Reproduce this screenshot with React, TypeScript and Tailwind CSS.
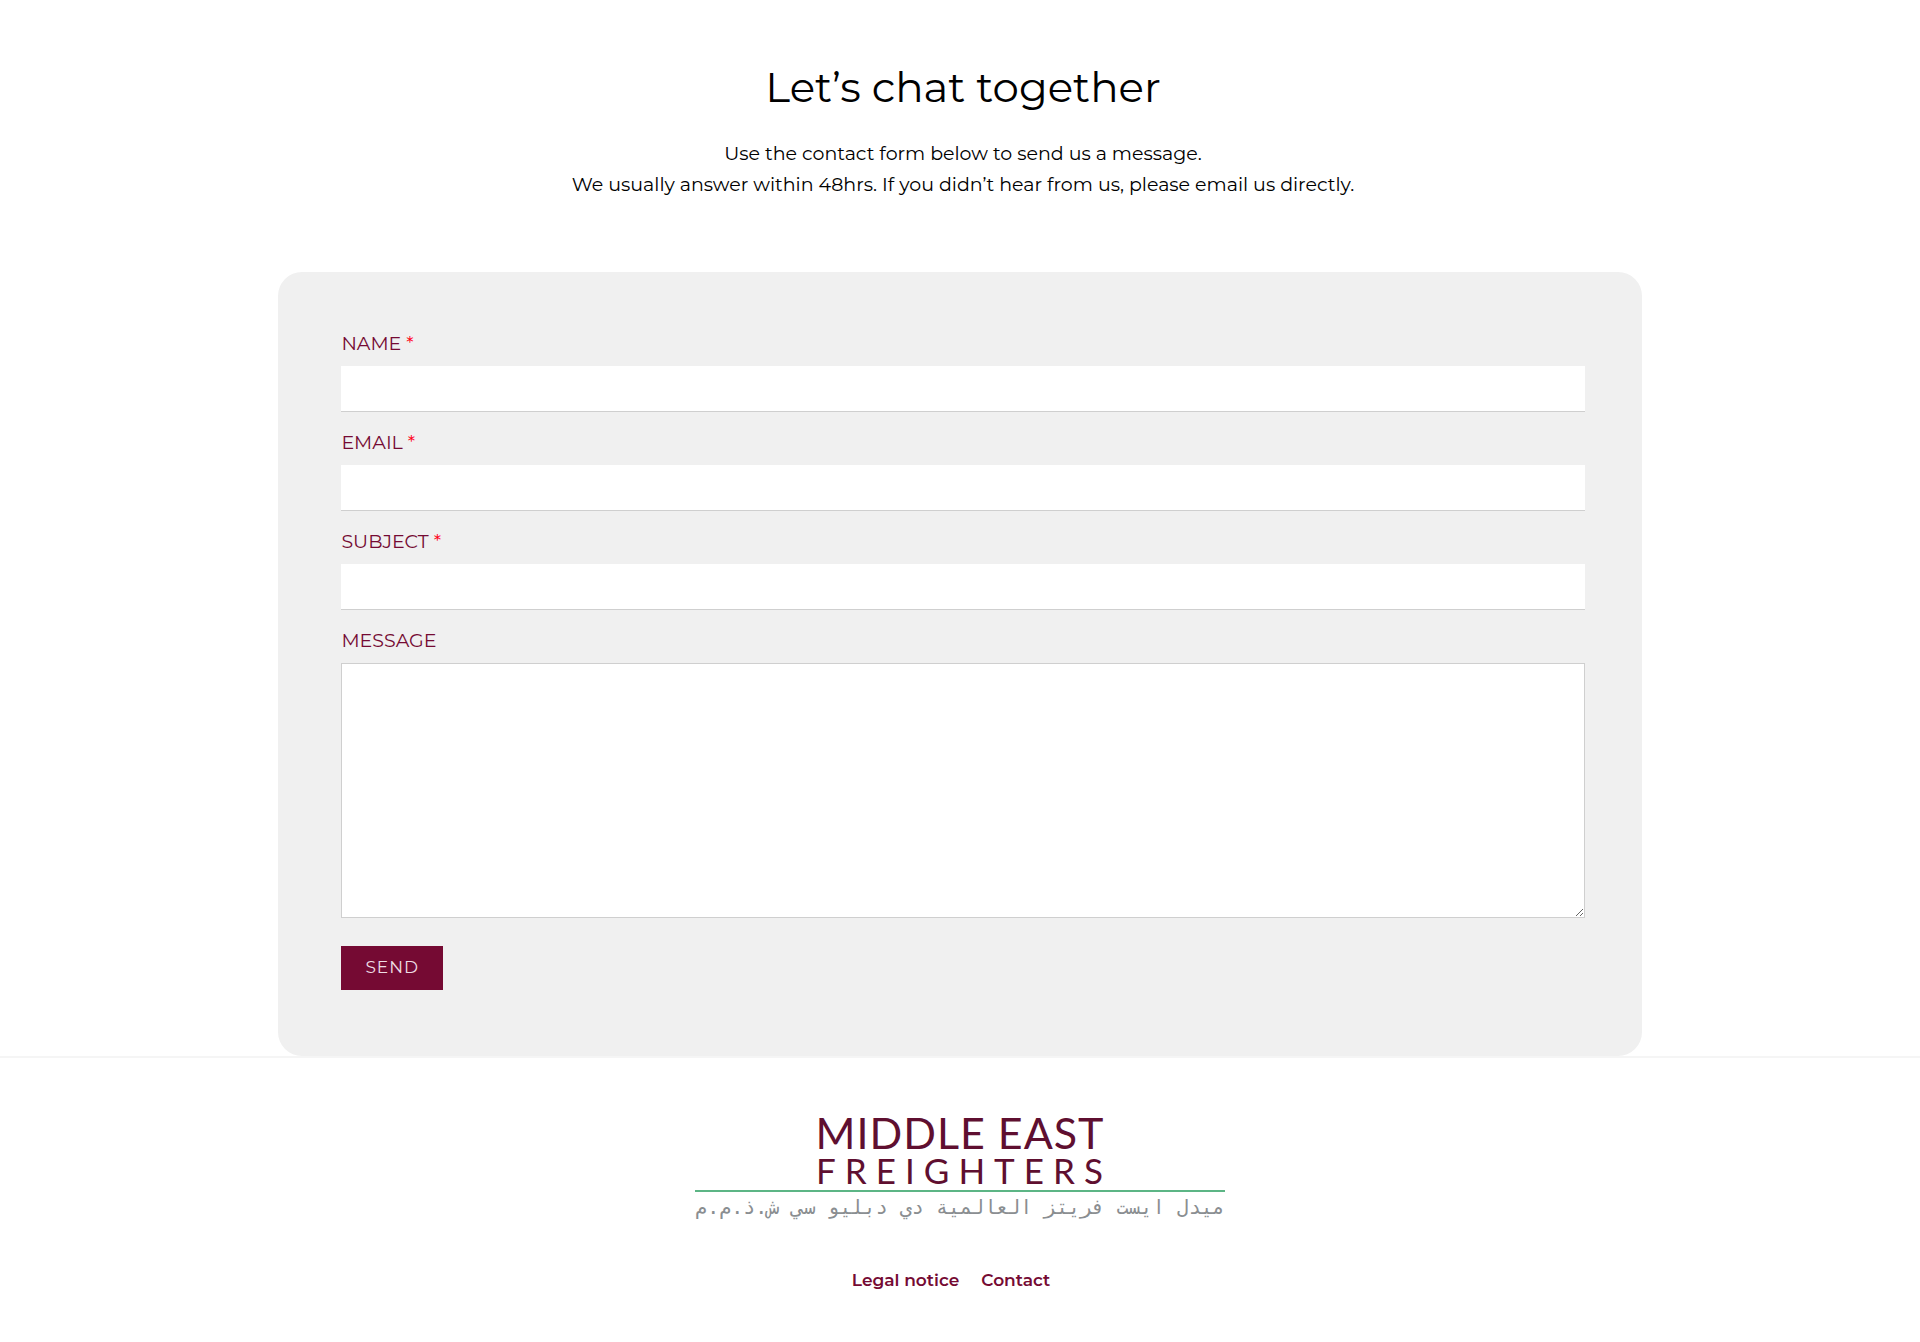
import type { FormEvent } from "react";

const fields = [
  { id: "name", label: "Name", type: "text" },
  { id: "email", label: "Email", type: "email" },
  { id: "subject", label: "Subject", type: "text" },
];

function Logo() {
  return (
    <a href="#home" className="flex flex-col items-center font-[Lato,sans-serif] text-[#5f0f30]">
      <span className="text-[43px] leading-[40px] tracking-[1px]">MIDDLE EAST</span>
      <span className="pl-2 text-[35px] leading-[34px] tracking-[9px]">FREIGHTERS</span>
      <span
        dir="rtl"
        lang="ar"
        className="mt-[3px] border-t-2 border-[#5cb585] font-['DejaVu_Sans_Mono',monospace] text-[20px] leading-[30px] text-[#8a8e91]"
      >
        ميدل ايست فريتز العالمية دي دبليو سي ش.ذ.م.م
      </span>
    </a>
  );
}

function ContactForm() {
  const handleSubmit = (event: FormEvent) => event.preventDefault();

  return (
    <form
      onSubmit={handleSubmit}
      noValidate
      className="rounded-3xl bg-[#f0f0f0] pt-[57px] pr-[57px] pb-[66px] pl-[63px]"
    >
      {fields.map((field) => (
        <div key={field.id} className="mb-4">
          <label htmlFor={field.id} className="block pb-[7px] text-[19px] leading-[30px] text-[#750a33] uppercase">
            {field.label} <span className="text-[#ff0018]">*</span>
          </label>
          <input
            id={field.id}
            name={field.id}
            type={field.type}
            required
            className="block h-[46px] w-full border-b border-[#cfcfcf] bg-white px-3 text-lg outline-none"
          />
        </div>
      ))}
      <label htmlFor="message" className="block pb-[7px] text-[19px] leading-[30px] text-[#750a33] uppercase">
        Message
      </label>
      <textarea
        id="message"
        name="message"
        className="block h-[255px] w-full border border-[#cfcfcf] bg-white p-3 text-lg outline-none"
      />
      <button type="submit" className="mt-7 h-[44px] bg-[#750a33] px-6 text-[17px] tracking-[1px] text-[#eedde4]">
        SEND
      </button>
    </form>
  );
}

export default function App() {
  return (
    <div className="min-h-screen bg-white font-[Montserrat,Inter,sans-serif] text-black">
      <main className="mx-auto w-[71%]">
        <header className="pt-[57px] pr-[57px] pb-[72px] pl-[63px] text-center">
          <h1 className="text-[42px] leading-[60px]">Let’s chat together</h1>
          <p className="mt-[21px] text-[19px] leading-[31px]">
            Use the contact form below to send us a message.
            <br />
            We usually answer within 48hrs. If you didn’t hear from us, please email us directly.
          </p>
        </header>
        <ContactForm />
      </main>
      <footer className="flex flex-col items-center border-t-2 border-[#f5f5f5] pt-[55px] pb-[46px]">
        <Logo />
        <nav className="mt-[44px] flex gap-[22px] pr-[18px] text-[17px] leading-[28px] font-semibold text-[#750a33]">
          <a href="#legal">Legal notice</a>
          <a href="#contact">Contact</a>
        </nav>
      </footer>
    </div>
  );
}
